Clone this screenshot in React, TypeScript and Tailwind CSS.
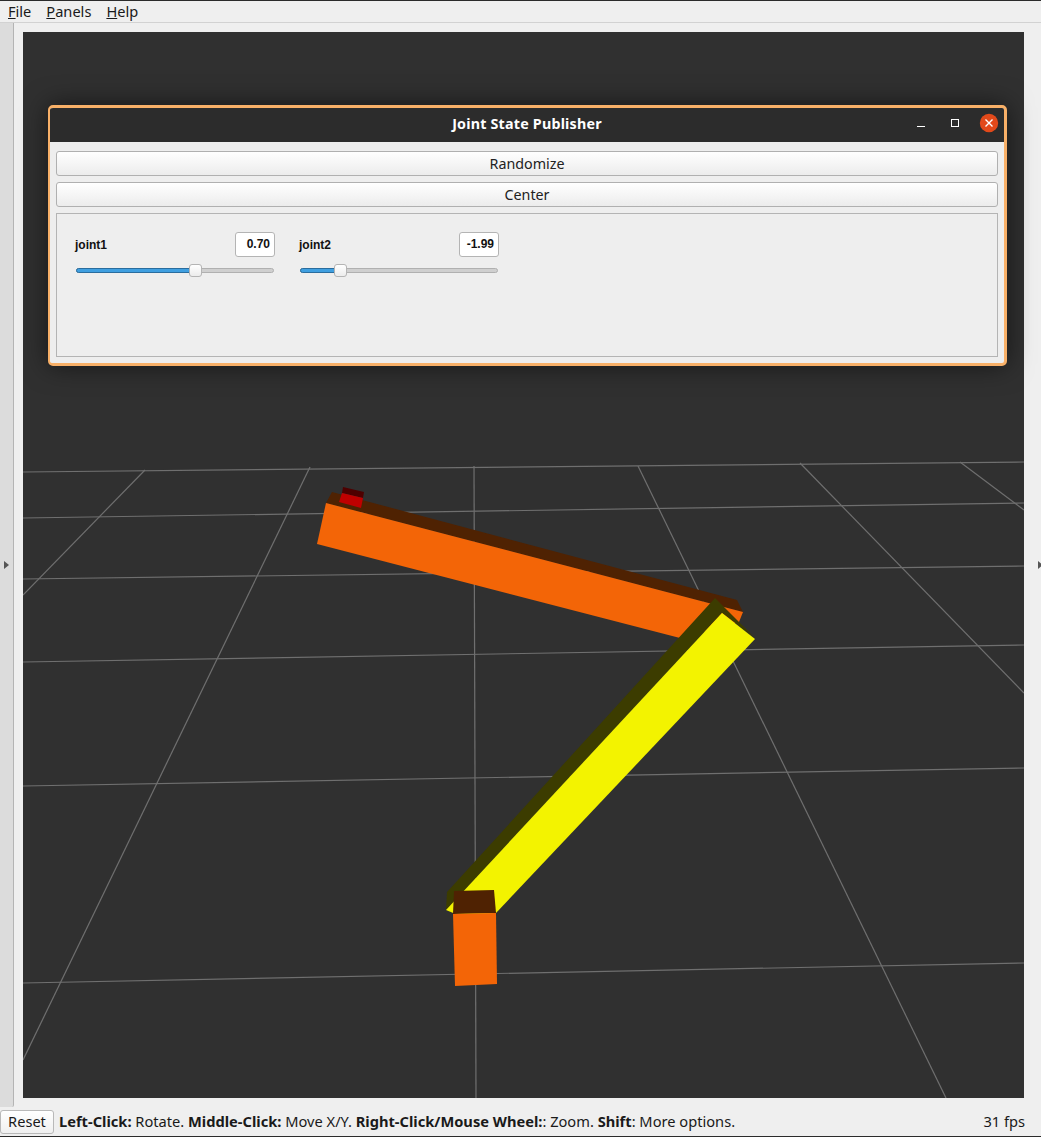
import React from "react";

const lines: [number, number, number, number][] = [
  [23, 472, 1024, 462],
  [23, 518, 1024, 503],
  [23, 579, 1024, 566],
  [23, 662, 1024, 645],
  [23, 786, 1024, 768],
  [23, 983, 1024, 963],
  [145, 470, 23, 595],
  [310, 467, 23, 1060],
  [474, 466, 476, 1098],
  [638, 466, 946, 1098],
  [800, 463, 1024, 693],
  [960, 462, 1024, 510],
];

const polys: [string, string][] = [
  ["#4f2202", "332,492 737,600 743,612 326,503"],
  ["#f36507", "326,503 743,612 739,622 680,638 317,544"],
  ["#4e0000", "343,487 364,492 363,498 342,493"],
  ["#c00000", "342,493 363,498 361,508 339,502"],
  ["#3c3c00", "715,598 755,638 722,613 446,910 447,892"],
  ["#f3f300", "722,613 755,639 496,913 470,920 446,910"],
  ["#4f2202", "454,891 494,890 496,913 453,914"],
  ["#f36507", "453,914 496,913 497,984 455,986"],
];

function Joint({ name, value, pct }: { name: string; value: string; pct: number }) {
  return (
    <div className="w-[200px] flex flex-col">
      <div className="flex items-center justify-between h-[25px]">
        <span className="text-[12px] font-bold text-[#111]">{name}</span>
        <div className="w-[40px] h-[25px] bg-white border border-[#b4b4b4] rounded-[3px] text-right pr-[4px] text-[12px] font-bold leading-[23px] text-[#111]">
          {value}
        </div>
      </div>
      <div className="relative mt-[11px] h-[5px] ml-[1px] w-[198px] bg-[#cfcfcf] border border-[#b0b0b0] rounded-[3px]">
        <div
          className="h-[5px] -mt-[1px] -ml-[1px] bg-[#3f9fe0] border border-[#2a6d9e] rounded-l-[3px]"
          style={{ width: `${pct + 1}px` }}
        />
        <div
          className="absolute top-[-5px] w-[13px] h-[13px] bg-gradient-to-b from-white to-[#ececec] border border-[#b4b4b4] rounded-[3px]"
          style={{ left: `${pct - 7}px` }}
        />
      </div>
    </div>
  );
}

function GtkButton({ label }: { label: string }) {
  return (
    <div className="h-[25px] rounded-[3px] border border-[#b0b0b0] bg-gradient-to-b from-white to-[#ececec] flex items-center justify-center text-[14.3px] text-[#222] [font-family:'Noto_Sans',sans-serif]">
      {label}
    </div>
  );
}

export default function App() {
  return (
    <div className="w-[1041px] h-[1137px] flex flex-col bg-[#efefef] overflow-hidden border-t border-b border-[#2b2b2b] text-[#1a1a1a] [font-family:'Noto_Sans',sans-serif]">
      <div className="h-[22px] shrink-0 flex items-center gap-[15px] pl-[8px] text-[14.6px] border-b border-[#d2d2d2]">
        <span><span className="underline">F</span>ile</span>
        <span><span className="underline">P</span>anels</span>
        <span><span className="underline">H</span>elp</span>
      </div>

      <div className="h-[1084px] shrink-0 flex">
        <div className="w-[14px] shrink-0 bg-[#dcdcdc] border-r border-[#b4b4b4] rounded-br-[2px] flex items-center">
          <svg width="6" height="10" viewBox="0 0 6 10" className="ml-[4px] mt-[-1px]">
            <path d="M0 1 L5 5 L0 9 Z" fill="#555" />
          </svg>
        </div>
        <div className="w-[1001px] ml-[9px] mt-[9px] h-[1066px] relative bg-[#303030] shrink-0">
          <svg width="1001" height="1066" viewBox="23 32 1001 1066" className="block">
            {lines.map((l, i) => (
              <line key={i} x1={l[0]} y1={l[1]} x2={l[2]} y2={l[3]} stroke="#6f6f6f" strokeWidth="1.2" />
            ))}
            {polys.map((p, i) => (
              <polygon key={i} points={p[1]} fill={p[0]} />
            ))}
          </svg>

          <div className="absolute left-[25px] top-[73px] w-[959px] h-[261px] border-y-[3px] border-r-[3px] border-l-[2px] border-[#f8b068] rounded-[5px] bg-[#eeeeee] shadow-[0_0_26px_rgba(0,0,0,0.55)] flex flex-col overflow-hidden">
            <div className="h-[34px] shrink-0 bg-[#2c2c2c] flex items-center relative">
              <span className="w-full text-center text-white text-[14.3px] font-bold tracking-[0.2px] -mt-[2px]">Joint State Publisher</span>
              <svg width="100" height="34" viewBox="0 0 100 34" className="absolute right-0 top-0">
                <rect x="13" y="18" width="8" height="1" fill="#fff" />
                <rect x="47.5" y="11.5" width="7" height="7" fill="none" stroke="#fff" />
                <circle cx="85" cy="15" r="9.2" fill="#e2491a" />
                <path d="M81.5 11.5 L88.5 18.5 M88.5 11.5 L81.5 18.5" stroke="#fff" strokeWidth="1.4" />
              </svg>
            </div>
            <div className="flex-1 px-[6px] pt-[9px] pb-[6px] flex flex-col gap-[6px]">
              <GtkButton label="Randomize" />
              <GtkButton label="Center" />
              <div className="flex-1 border border-[#b4b4b4] flex gap-[24px] pl-[18px] pt-[18px] [font-family:'Liberation_Sans',sans-serif]">
                <Joint name="joint1" value="0.70" pct={119} />
                <Joint name="joint2" value="-1.99" pct={40} />
              </div>
            </div>
          </div>
        </div>
        <div className="flex-1 flex items-center justify-end">
          <svg width="3" height="10" viewBox="0 0 3 10" className="mt-[-1px]">
            <path d="M0 1 L3 3.5 L3 6.5 L0 9 Z" fill="#555" />
          </svg>
        </div>
      </div>

      <div className="flex-1 flex items-center text-[14.65px] relative">
        <div className="w-[54px] h-[24px] mt-[1px] border border-[#b9b9b9] rounded-[3px] bg-gradient-to-b from-white to-[#f0f0f0] flex items-center justify-center text-[14.6px]">
          Reset
        </div>
        <span className="ml-[5px]">
          <b>Left-Click:</b> Rotate. <b>Middle-Click:</b> Move X/Y. <b>Right-Click/Mouse Wheel:</b>: Zoom. <b>Shift</b>: More options.
        </span>
        <span className="ml-auto mr-[16px]">31 fps</span>
      </div>
    </div>
  );
}
